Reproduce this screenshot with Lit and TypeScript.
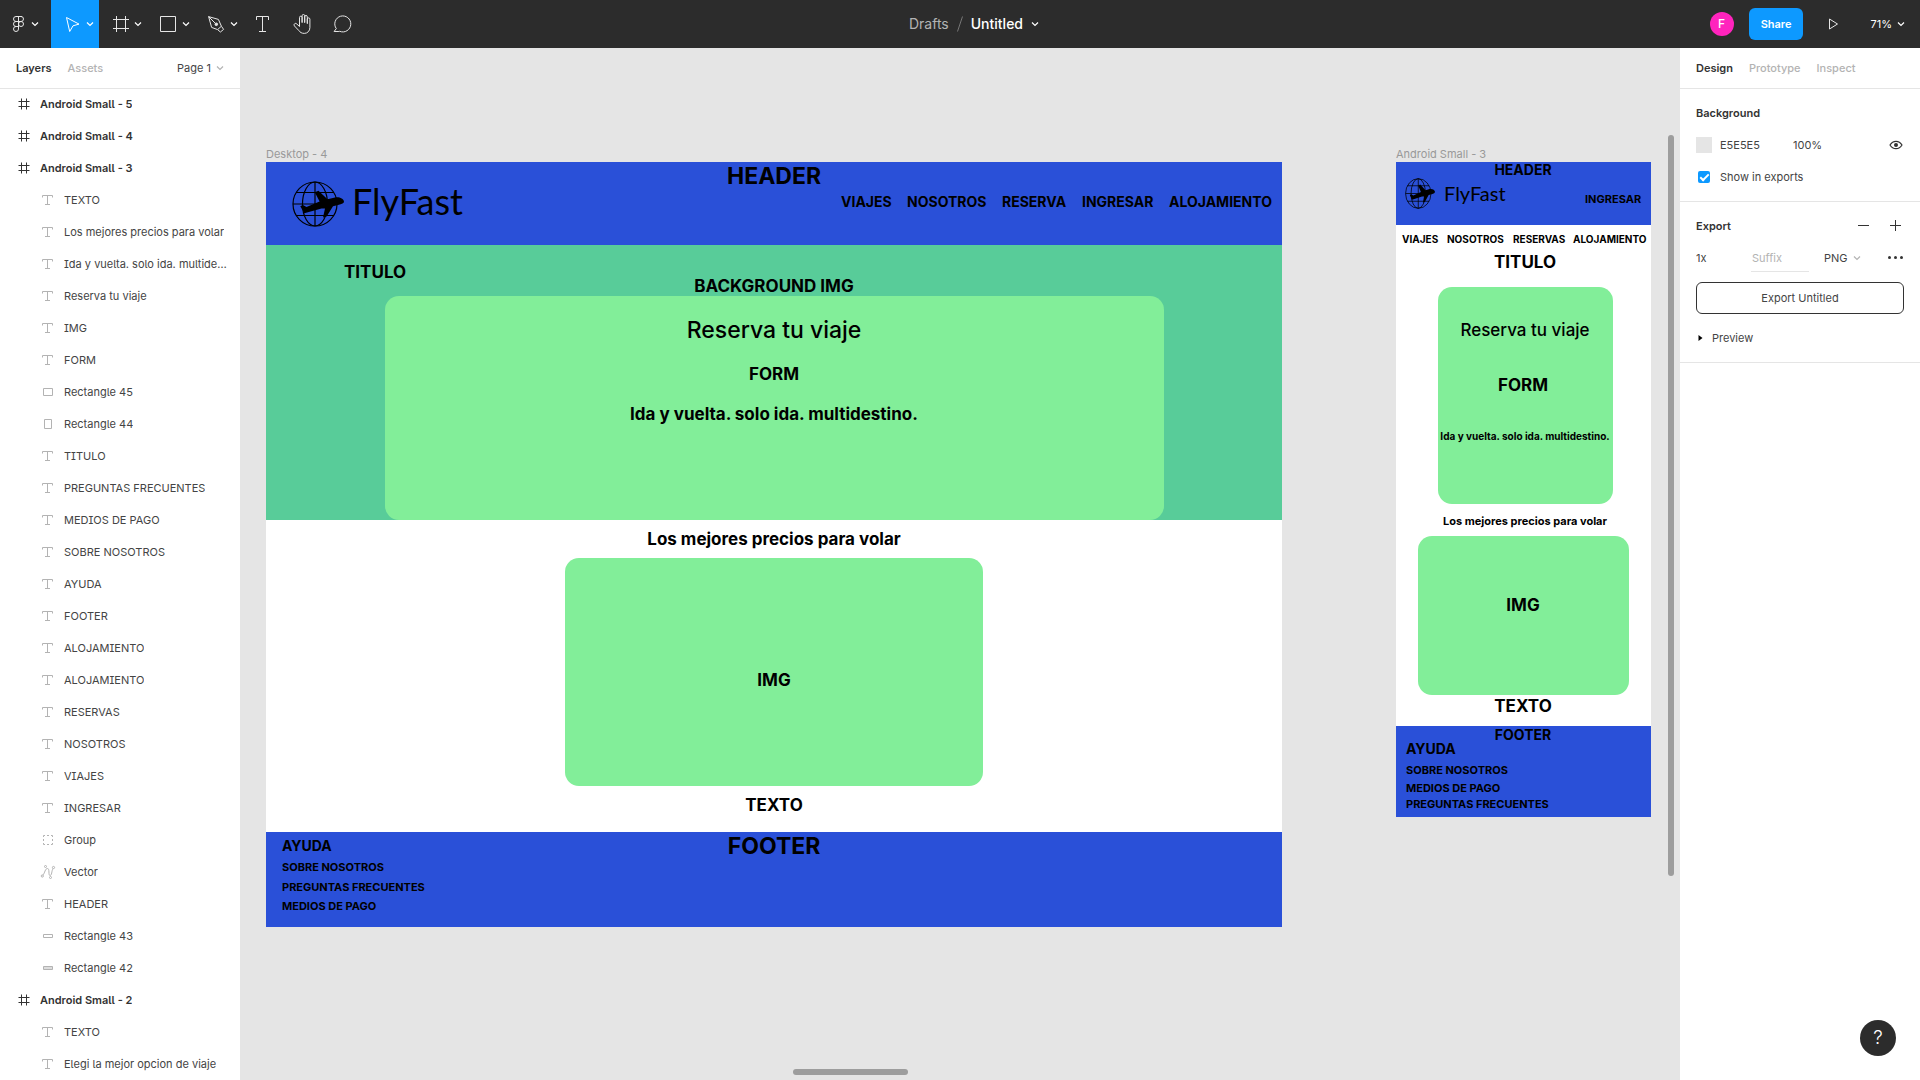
import { LitElement, html, css, svg, nothing } from "lit";
import { customElement, property } from "lit/decorators.js";
import { classMap } from "lit/directives/class-map.js";
import { styleMap } from "lit/directives/style-map.js";

/* ---------- icons ---------- */

const toolIcons: Record<string, unknown> = {
  menu: svg`<path d="M9 4.5h6M9 4.5a2.5 2.5 0 0 0 0 5M9 9.5a2.5 2.5 0 0 0 0 5M9 14.5a2.5 2.5 0 1 0 2.5 2.5V4.5H14a2.5 2.5 0 0 1 0 5H9M9 14.5h2.5M14 9.5a2.5 2.5 0 1 1-2.5 2.5A2.5 2.5 0 0 1 14 9.5z"/>`,
  move: svg`<path d="M5.5 5.5l12.5 6.6-6 1.7-3.3 5.7z"/>`,
  frame: svg`<path d="M7.5 4v16M16.5 4v16M4 7.5h16M4 16.5h16"/>`,
  rect: svg`<path d="M3.5 4.5h15v15h-15z"/>`,
  pen: svg`<path d="M3.6 4.6L13.4 7.4L16.4 14.2L18.6 17.4L15.4 20L12.6 17.6L6.6 15.4zM3.6 4.6L10.6 11.6"/><circle cx="11.3" cy="12.3" r="1.3" fill="currentColor"/><path d="M12.8 17.4l3.4-3"/>`,
  text: svg`<path d="M5.5 8V4.5h12V8M11.5 4.5v15M8 19.5h7"/>`,
  hand: svg`<path d="M8.5 14.5V5.5a1.3 1.3 0 0 1 2.6 0V11M11.1 10V3.8a1.3 1.3 0 0 1 2.6 0V11M13.7 10V4.8a1.3 1.3 0 0 1 2.6 0V12M16.3 11V7.2a1.3 1.3 0 0 1 2.6 0V15.5c0 3.4-2.4 5.9-5.6 5.9-2.6 0-4.2-1-5.6-3l-4.3-4.5a1.5 1.5 0 0 1 2.4-1.9L8.5 14.5"/>`,
  comment: svg`<path d="M3.1 19.5L5.3 16.6A8 8 0 1 1 8.7 19.3L7.9 19.5z"/>`,
  play: svg`<path d="M9.5 7l8 5-8 5z" />`,
};

const layerIcons: Record<string, unknown> = {
  frame: svg`<path d="M5.5 2.5v11M10.5 2.5v11M2.5 5.5h11M2.5 10.5h11" stroke="#333"/>`,
  text: svg`<path d="M2.5 5.5v-2h10v2M7.5 3.5v9M5 12.5h5"/>`,
  wide: svg`<path d="M3.5 4.5h9v7h-9z"/>`,
  tall: svg`<path d="M4.5 3.5h7v9h-7z"/>`,
  bar: svg`<path d="M3.5 6.5h9v3h-9z"/>`,
  barFill: svg`<path d="M3.5 6.5h9v3h-9z" fill="#ddd"/>`,
  group: svg`<path d="M3.5 5V3.5H5M7 3.5h2M11 3.5h1.5V5M12.5 7v2M12.5 11v1.5H11M9 12.5H7M5 12.5H3.5V11M3.5 9V7"/>`,
  vector: svg`<path d="M2.8 11.2C5 9 5 4.5 7.5 4.5S8 11.5 10 11.5 11.5 7 13 4.5"/><circle cx="2.3" cy="12" r="1.1"/><circle cx="5.5" cy="2.5" r="1"/><circle cx="13.5" cy="3.5" r="1.1"/><circle cx="10.5" cy="13.5" r="1"/>`,
};

const chevron = html`<svg class="chev" viewBox="0 0 8 8" aria-hidden="true">
  <path d="M1 2.5l3 3 3-3" fill="none" stroke="currentColor" stroke-width="1.2" />
</svg>`;

const tool = (name: string) => html`<svg class="icon" viewBox="0 0 24 24" fill="none" stroke="currentColor" aria-hidden="true">
  ${toolIcons[name]}
</svg>`;

/* ---------- canvas data ---------- */

type Tone = "blue" | "teal" | "lime";
interface Box { x: number; y: number; w: number; h: number; tone: Tone; round?: boolean }
interface Label { t: string; x: number; y: number; size: number; center?: boolean; medium?: boolean }
interface Board {
  name: string; x: number; y: number; w: number; h: number;
  boxes: Box[]; labels: Label[];
  logo: { x: number; y: number; w: number; h: number };
  brand: { x: number; y: number; size: number };
}

const boards: Board[] = [
  {
    name: "Desktop - 4", x: 26, y: 114, w: 1016, h: 765,
    boxes: [
      { x: 0, y: 0, w: 1016, h: 83, tone: "blue" },
      { x: 0, y: 83, w: 1016, h: 275, tone: "teal" },
      { x: 119, y: 134, w: 779, h: 224, tone: "lime", round: true },
      { x: 299, y: 396, w: 418, h: 228, tone: "lime", round: true },
      { x: 0, y: 670, w: 1016, h: 95, tone: "blue" },
    ],
    labels: [
      { t: "HEADER", x: 508, y: 14, size: 23, center: true },
      { t: "VIAJES", x: 575, y: 40, size: 14 },
      { t: "NOSOTROS", x: 641, y: 40, size: 14 },
      { t: "RESERVA", x: 736, y: 40, size: 14 },
      { t: "INGRESAR", x: 816, y: 40, size: 14 },
      { t: "ALOJAMIENTO", x: 903, y: 40, size: 14 },
      { t: "TITULO", x: 78, y: 110, size: 17 },
      { t: "BACKGROUND IMG", x: 508, y: 124, size: 17, center: true },
      { t: "Reserva tu viaje", x: 508, y: 168, size: 23, center: true, medium: true },
      { t: "FORM", x: 508, y: 212, size: 17, center: true },
      { t: "Ida y vuelta. solo ida. multidestino.", x: 508, y: 252, size: 17, center: true },
      { t: "Los mejores precios para volar", x: 508, y: 377, size: 17, center: true },
      { t: "IMG", x: 508, y: 518, size: 17, center: true },
      { t: "TEXTO", x: 508, y: 643, size: 17, center: true },
      { t: "FOOTER", x: 508, y: 684, size: 23, center: true },
      { t: "AYUDA", x: 16, y: 684, size: 14 },
      { t: "SOBRE NOSOTROS", x: 16, y: 705, size: 11 },
      { t: "PREGUNTAS FRECUENTES", x: 16, y: 725, size: 11 },
      { t: "MEDIOS DE PAGO", x: 16, y: 744, size: 11 },
    ],
    logo: { x: 26, y: 19, w: 52, h: 46 },
    brand: { x: 86, y: 37, size: 36 },
  },
  {
    name: "Android Small - 3", x: 1156, y: 114, w: 255, h: 655,
    boxes: [
      { x: 0, y: 0, w: 255, h: 63, tone: "blue" },
      { x: 42, y: 125, w: 175, h: 217, tone: "lime", round: true },
      { x: 22, y: 374, w: 211, h: 159, tone: "lime", round: true },
      { x: 0, y: 564, w: 255, h: 91, tone: "blue" },
    ],
    labels: [
      { t: "HEADER", x: 127, y: 8, size: 14, center: true },
      { t: "INGRESAR", x: 189, y: 37, size: 11 },
      { t: "VIAJES", x: 6, y: 77, size: 10 },
      { t: "NOSOTROS", x: 51, y: 77, size: 10 },
      { t: "RESERVAS", x: 117, y: 77, size: 10 },
      { t: "ALOJAMIENTO", x: 177, y: 77, size: 10 },
      { t: "TITULO", x: 129, y: 100, size: 17, center: true },
      { t: "Reserva tu viaje", x: 129, y: 168, size: 17, center: true, medium: true },
      { t: "FORM", x: 127, y: 223, size: 17, center: true },
      { t: "Ida y vuelta. solo ida. multidestino.", x: 129, y: 274, size: 10, center: true },
      { t: "Los mejores precios para volar", x: 129, y: 359, size: 11, center: true },
      { t: "IMG", x: 127, y: 443, size: 17, center: true },
      { t: "TEXTO", x: 127, y: 544, size: 17, center: true },
      { t: "FOOTER", x: 127, y: 573, size: 14, center: true },
      { t: "AYUDA", x: 10, y: 587, size: 14 },
      { t: "SOBRE NOSOTROS", x: 10, y: 608, size: 11 },
      { t: "MEDIOS DE PAGO", x: 10, y: 626, size: 11 },
      { t: "PREGUNTAS FRECUENTES", x: 10, y: 642, size: 11 },
    ],
    logo: { x: 9, y: 16, w: 30, h: 31 },
    brand: { x: 48, y: 29, size: 20 },
  },
];

const px = (n: number) => `${n}px`;

@customElement("design-board")
export class DesignBoard extends LitElement {
  @property({ attribute: false }) board!: Board;

  static styles = css`
    :host { position: absolute; background: #fff; color: #000; font-family: Inter, sans-serif; }
    .name { position: absolute; left: 0; bottom: 100%; color: #999; font-size: 11px; line-height: 16px; white-space: nowrap; }
    .box { position: absolute; }
    .blue { background: #2a50d8; }
    .teal { background: #58cc99; }
    .lime { background: #82ee99; }
    .round { border-radius: 14px; }
    .label { position: absolute; line-height: 24px; font-weight: 700; white-space: nowrap; }
    .center { width: 400px; margin-left: -200px; text-align: center; }
    .medium { font-weight: 500; }
    .logo { position: absolute; display: block; }
    .brand { position: absolute; line-height: 40px; margin-top: -20px; font-family: Lato, sans-serif; font-weight: 400; white-space: nowrap; }
  `;

  render() {
    const b = this.board;
    return html`
      <span class="name">${b.name}</span>
      ${b.boxes.map((r) => html`<div
        class=${classMap({ box: true, [r.tone]: true, round: !!r.round })}
        style=${styleMap({ left: px(r.x), top: px(r.y), width: px(r.w), height: px(r.h) })}></div>`)}
      <svg class="logo" viewBox="0 0 52 46" preserveAspectRatio="none" aria-hidden="true"
        style=${styleMap({ left: px(b.logo.x), top: px(b.logo.y), width: px(b.logo.w), height: px(b.logo.h) })}>
        <g fill="none" stroke="#000" stroke-width="1.2">
          <circle cx="23" cy="23" r="22" />
          <ellipse cx="23" cy="23" rx="12.5" ry="22" />
          <path d="M23 1v44M1 23h44M4 11.5h38M4 34.5h38" />
        </g>
        <path d="M52 20.5C51.5 17.5 47.5 15.8 43 16.5L35.5 18.2 26.5 9.8 22.8 11.2 27.6 20.6 14.5 26 10.8 24 8.3 25.2 12.3 32.2 29.5 27.5 33 27.5 31 36.6 34.6 35.4 41 25.3 46 24C50 23 52 22.3 52 20.5z" />
      </svg>
      <span class="brand" style=${styleMap({ left: px(b.brand.x), top: px(b.brand.y + 2), fontSize: px(b.brand.size) })}>FlyFast</span>
      ${b.labels.map((l) => html`<span
        class=${classMap({ label: true, center: !!l.center, medium: !!l.medium })}
        style=${styleMap({ left: px(l.x), top: px(l.y - 12), fontSize: px(l.size) })}>${l.t}</span>`)}
    `;
  }
}

/* ---------- layers ---------- */

const layers: [string, string][] = [
  ["frame", "Android Small - 5"],
  ["frame", "Android Small - 4"],
  ["frame", "Android Small - 3"],
  ["text", "TEXTO"],
  ["text", "Los mejores precios para volar"],
  ["text", "Ida y vuelta. solo ida. multidestino."],
  ["text", "Reserva tu viaje"],
  ["text", "IMG"],
  ["text", "FORM"],
  ["wide", "Rectangle 45"],
  ["tall", "Rectangle 44"],
  ["text", "TITULO"],
  ["text", "PREGUNTAS FRECUENTES"],
  ["text", "MEDIOS DE PAGO"],
  ["text", "SOBRE NOSOTROS"],
  ["text", "AYUDA"],
  ["text", "FOOTER"],
  ["text", "ALOJAMIENTO"],
  ["text", "ALOJAMIENTO"],
  ["text", "RESERVAS"],
  ["text", "NOSOTROS"],
  ["text", "VIAJES"],
  ["text", "INGRESAR"],
  ["group", "Group"],
  ["vector", "Vector"],
  ["text", "HEADER"],
  ["bar", "Rectangle 43"],
  ["barFill", "Rectangle 42"],
  ["frame", "Android Small - 2"],
  ["text", "TEXTO"],
  ["text", "Elegi la mejor opcion de viaje"],
];

const tools: { id: string; label: string; menu?: boolean }[] = [
  { id: "menu", label: "Main menu", menu: true },
  { id: "move", label: "Move", menu: true },
  { id: "frame", label: "Frame", menu: true },
  { id: "rect", label: "Shape", menu: true },
  { id: "pen", label: "Pen", menu: true },
  { id: "text", label: "Text" },
  { id: "hand", label: "Hand" },
  { id: "comment", label: "Comment" },
];

@customElement("app-root")
export class AppRoot extends LitElement {
  static styles = css`
    :host {
      display: flex; flex-direction: column; height: 100vh; overflow: hidden; position: relative;
      font-family: Inter, sans-serif; font-size: 11px; line-height: 16px; color: #444; background: #e5e5e5;
    }
    * { box-sizing: border-box; }
    button, input, select { font: inherit; color: inherit; background: none; border: 0; padding: 0; margin: 0; min-width: 0; }
    button { cursor: pointer; }
    svg { display: block; flex: none; }
    .icon { width: 24px; height: 24px; }
    .chev { width: 8px; height: 8px; }

    .bar { display: grid; grid-template-columns: 1fr auto 1fr; flex: none; height: 48px; background: #2c2c2c; color: #fff; }
    .tools { display: flex; }
    .tool { display: flex; align-items: center; gap: 1px; padding: 0 5px 0 10px; color: #e6e6e6; }
    .tool .chev { color: #fff; }
    .tool.plain { padding: 0 8px; }
    .tool.menu { padding: 0 11px 0 7px; gap: 0; width: 51px; }
    .tool.move { background: #0d99ff; color: #fff; }
    .file { display: flex; align-items: center; gap: 8px; padding-left: 28px; font-size: 14px; line-height: 20px; }
    .folder { color: #b3b3b3; text-decoration: none; }
    .slash { color: #777; }
    .doc { display: flex; align-items: center; gap: 8px; font-weight: 500; }
    .actions { display: flex; align-items: center; justify-content: flex-end; padding-right: 15px; }
    .avatar { display: grid; place-items: center; width: 24px; height: 24px; border-radius: 50%; background: #ff24bd; font-size: 12px; font-weight: 500; }
    .share { height: 32px; margin-left: 15px; padding: 0 12px; border-radius: 6px; background: #0d99ff; font-weight: 600; }
    .play { margin: 0 26px 0 17px; color: #e6e6e6; }
    .zoom { display: flex; align-items: center; gap: 5px; }

    .body { display: flex; flex: 1; min-height: 0; }
    .side { flex: none; width: 240px; background: #fff; overflow: hidden; }
    .tabs { display: flex; align-items: center; gap: 16px; height: 40px; padding: 0 16px; box-shadow: 0 1px 0 #e5e5e5; }
    .tab { color: #b3b3b3; font-weight: 500; }
    .tab.on { color: #333; font-weight: 600; }
    .page { display: flex; align-items: center; gap: 5px; margin-left: auto; }
    .page .chev, .format .chev { color: #b3b3b3; }

    .layers { list-style: none; margin: 0; padding: 0; }
    .layer { display: flex; align-items: center; gap: 8px; width: 100%; height: 32px; padding: 0 8px 0 40px; text-align: left; font-feature-settings: "ss02"; }
    .layer.top { padding-left: 16px; color: #333; font-weight: 600; }
    .layer svg { width: 16px; height: 16px; }
    .text { overflow: hidden; text-overflow: ellipsis; white-space: nowrap; }

    .canvas { position: relative; flex: 1; min-width: 0; overflow: hidden; }
    .thumb { position: absolute; border-radius: 3px; background: #9d9d9d; }
    .down { right: 6px; top: 87px; width: 6px; height: 741px; }
    .across { left: 553px; bottom: 5px; width: 115px; height: 6px; }

    .section { padding: 8px; border-bottom: 1px solid #e5e5e5; }
    .first { padding-top: 9px; }
    .row { display: flex; align-items: center; height: 32px; padding-left: 8px; }
    .title { margin: 0 auto 0 0; color: #333; font-size: 11px; font-weight: 600; }
    .square { display: grid; place-items: center; width: 32px; height: 32px; }
    .square svg { width: 16px; height: 16px; }
    .fill { display: grid; grid-template-columns: 16px 65px 1fr 32px; gap: 8px; }
    .swatch { width: 16px; height: 16px; background: #e5e5e5; }
    .check { gap: 10px; padding-left: 10px; }
    .tick { appearance: none; display: grid; place-items: center; width: 12px; height: 12px; border-radius: 2px; background: #0d99ff; }
    .tick:checked::after { content: ""; width: 7px; height: 3px; margin-bottom: 2px; border: solid #fff; border-width: 0 0 2px 2px; transform: rotate(-45deg); }
    .export { display: grid; grid-template-columns: 55px 58px 1fr 32px; }
    .suffix { height: 27px; border-bottom: 1px solid #e5e5e5; padding-left: 1px; }
    .suffix::placeholder { color: #b3b3b3; opacity: 1; }
    .format { display: flex; align-items: center; gap: 5px; padding-left: 15px; }
    .pick { appearance: none; }
    .submit { display: block; width: calc(100% - 16px); height: 32px; margin: 8px; border: 1px solid #333; border-radius: 6px; }
    .preview { gap: 8px; padding-left: 10px; width: 100%; }
    .preview svg { width: 6px; height: 8px; }

    .help {
      position: absolute; right: 24px; bottom: 24px; width: 36px; height: 36px; border-radius: 50%;
      background: #2c2c2c; color: #fff; font-size: 19px; font-weight: 300;
    }
  `;

  private renderTool(t: { id: string; label: string; menu?: boolean }) {
    return html`<button
      class=${classMap({ tool: true, plain: !t.menu, menu: t.id === "menu", move: t.id === "move" })}
      aria-label=${t.label}>${tool(t.id)}${t.menu ? chevron : nothing}</button>`;
  }

  render() {
    return html`
      <header class="bar">
        <nav class="tools" aria-label="Tools">${tools.map((t) => this.renderTool(t))}</nav>
        <div class="file">
          <a class="folder" href="#drafts">Drafts</a>
          <svg class="slash" width="6" height="16" viewBox="0 0 6 16" aria-hidden="true"><path d="M5.5 0.5L0.5 15.5" stroke="currentColor" /></svg>
          <button class="doc">Untitled ${chevron}</button>
        </div>
        <div class="actions">
          <button class="avatar" aria-label="Account">F</button>
          <button class="share">Share</button>
          <button class="play" aria-label="Present">${tool("play")}</button>
          <button class="zoom">71% ${chevron}</button>
        </div>
      </header>
      <div class="body">
        <aside class="side">
          <div class="tabs">
            <button class="tab on">Layers</button>
            <button class="tab">Assets</button>
            <button class="page">Page 1 ${chevron}</button>
          </div>
          <ul class="layers">
            ${layers.map(([kind, name]) => html`<li>
              <button class=${classMap({ layer: true, top: kind === "frame" })}>
                <svg viewBox="0 0 16 16" fill="none" stroke="#b3b3b3" aria-hidden="true">${layerIcons[kind]}</svg>
                <span class="text">${name}</span>
              </button>
            </li>`)}
          </ul>
        </aside>
        <main class="canvas">
          ${boards.map((b) => html`<design-board .board=${b}
            style=${styleMap({ left: px(b.x), top: px(b.y), width: px(b.w), height: px(b.h) })}></design-board>`)}
          <div class="thumb down"></div>
          <div class="thumb across"></div>
        </main>
        <aside class="side">
          <div class="tabs">
            <button class="tab on">Design</button>
            <button class="tab">Prototype</button>
            <button class="tab">Inspect</button>
          </div>
          <section class="section first">
            <div class="row"><h2 class="title">Background</h2></div>
            <div class="row fill">
              <span class="swatch"></span>
              <input aria-label="Color" .value=${"E5E5E5"} />
              <input aria-label="Opacity" .value=${"100%"} />
              <button class="square" aria-label="Visibility">
                <svg viewBox="0 0 16 16" aria-hidden="true">
                  <path d="M2 8C3.5 5.5 5.5 4.3 8 4.3S12.5 5.5 14 8C12.5 10.5 10.5 11.7 8 11.7S3.5 10.5 2 8z" fill="none" stroke="#333" stroke-width="1.2" />
                  <circle cx="8" cy="8" r="2" fill="#333" />
                </svg>
              </button>
            </div>
            <label class="row check"><input class="tick" type="checkbox" checked />Show in exports</label>
          </section>
          <section class="section">
            <div class="row">
              <h2 class="title">Export</h2>
              <button class="square" aria-label="Remove export"><svg viewBox="0 0 16 16"><path d="M2 7.5h11" stroke="#333" /></svg></button>
              <button class="square" aria-label="Add export"><svg viewBox="0 0 16 16"><path d="M2 7.5h11M7.5 2v11" stroke="#333" /></svg></button>
            </div>
            <div class="row export">
              <input aria-label="Scale" .value=${"1x"} />
              <input class="suffix" aria-label="Suffix" placeholder="Suffix" />
              <label class="format">
                <select class="pick" aria-label="Format"><option>PNG</option></select>${chevron}
              </label>
              <button class="square" aria-label="More options">
                <svg viewBox="0 0 16 16" fill="#333"><circle cx="1.5" cy="7.5" r="1.5" /><circle cx="7.5" cy="7.5" r="1.5" /><circle cx="13.5" cy="7.5" r="1.5" /></svg>
              </button>
            </div>
            <button class="submit">Export Untitled</button>
            <button class="row preview">
              <svg viewBox="0 0 6 8" aria-hidden="true"><path d="M0.5 1l4 3-4 3z" fill="#000" /></svg>Preview
            </button>
          </section>
        </aside>
      </div>
      <button class="help" aria-label="Help">?</button>
    `;
  }
}
